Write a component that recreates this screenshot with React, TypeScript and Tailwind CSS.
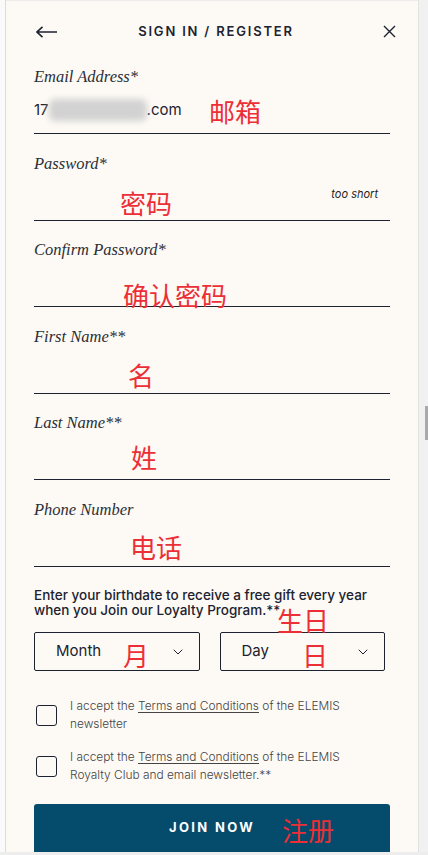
import React from "react";
import { ChevronDown } from "lucide-react";

const sans = "font-['Inter','Liberation_Sans',sans-serif]";
const serif = "font-['Liberation_Serif',serif]";
const cjk = "font-['Noto_Sans_CJK_SC',sans-serif]";

function Field({
  label,
  children,
  hint,
}: {
  label: string;
  children?: React.ReactNode;
  hint?: string;
}) {
  return (
    <div className="relative mb-[19.5px]">
      <div className={`${serif} italic text-[16.5px] leading-5 text-[#2b2f38]`}>{label}</div>
      <div className="h-[47px] border-b border-[#1c2230] flex items-center">{children}</div>
      {hint && (
        <span className={`${sans} absolute right-3 top-[32px] text-[11px] italic text-[#222]`}>{hint}</span>
      )}
    </div>
  );
}

function DateSelect({ label }: { label: string }) {
  return (
    <div className="flex-1 h-[39px] border border-[#1c2230] rounded-[2px] flex items-center justify-between pl-[21px] pr-[13px]">
      <span className={`${sans} text-[15px] text-[#1c2230]`}>{label}</span>
      <ChevronDown className="w-4 h-4 text-[#1c2230]" strokeWidth={1.5} />
    </div>
  );
}

function Consent({ children }: { children: React.ReactNode }) {
  return (
    <div className="flex items-center gap-[13px] pl-[2px]">
      <div className="w-[21px] h-[21px] shrink-0 border border-[#1c2230] rounded-[3px]" />
      <p className={`${sans} font-light text-[11.9px] leading-[18px] text-[#444]`}>{children}</p>
    </div>
  );
}

// red notes placed over the form
const notes = [
  { text: "邮箱", x: 209, y: 98 },
  { text: "密码", x: 120, y: 190 },
  { text: "确认密码", x: 123, y: 282 },
  { text: "名", x: 128, y: 362 },
  { text: "姓", x: 131, y: 444 },
  { text: "电话", x: 130, y: 534 },
  { text: "生日", x: 277, y: 607 },
  { text: "月", x: 123, y: 642 },
  { text: "日", x: 302, y: 642 },
  { text: "注册", x: 282, y: 817 },
];

export default function App() {
  return (
    <div className="relative w-[428px] h-[855px] bg-[#ededed] overflow-hidden">
      <div className="flex h-[852px]">
        <div className="w-[6px] bg-[#fafafa] border-r border-[#dcdcdc]" />
        <div className="w-[412px] bg-[#fdfaf5] border-t border-[#ececec] flex flex-col">
          <header className="h-16 grid grid-cols-[1fr_auto_1fr] items-center pl-[30px] pr-[22px]">
            <svg width="21" height="12" viewBox="0 0 21 12" fill="none" stroke="#1c2230" strokeWidth="1.6">
              <path d="M1 6h20M6.5 0.8L1 6l5.5 5.2" />
            </svg>
            <h1 className={`${sans} font-semibold text-[13px] tracking-[0.14em] text-[#1c2230]`}>
              SIGN IN / REGISTER
            </h1>
            <svg className="justify-self-end" width="13" height="13" viewBox="0 0 13 13" stroke="#1c2230" strokeWidth="1.4">
              <path d="M1 1l11 11M12 1L1 12" />
            </svg>
          </header>

          <form className="px-7 pt-[5px] flex flex-col">
            <Field label="Email Address*">
              <span className={`${sans} text-[15px] text-[#1c2230] flex items-center`}>
                17
                <span className="inline-block w-[98px] h-[22px] bg-[#d2d2d2] rounded-md blur-[3px]" />
                .com
              </span>
            </Field>
            <Field label="Password*" hint="too short" />
            <Field label="Confirm Password*" />
            <Field label="First Name**" />
            <Field label="Last Name**" />
            <Field label="Phone Number" />

            <p className={`${sans} font-medium text-[13.5px] leading-[15px] text-[#1c2230] mt-[2px]`}>
              Enter your birthdate to receive a free gift every year
              <br />
              when you Join our Loyalty Program.**
            </p>
            <div className="flex gap-5 mt-[14px] pr-[5px]">
              <DateSelect label="Month" />
              <DateSelect label="Day" />
            </div>

            <div className="flex flex-col gap-[15px] mt-[26px]">
              <Consent>
                I accept the <span className="underline underline-offset-2">Terms and Conditions</span> of the ELEMIS
                <br />
                newsletter
              </Consent>
              <Consent>
                I accept the <span className="underline underline-offset-2">Terms and Conditions</span> of the ELEMIS
                <br />
                Royalty Club and email newsletter.**
              </Consent>
            </div>

            <button
              type="button"
              className={`${sans} mt-[20px] h-12 rounded-t-[3px] bg-[#044b6c] text-white font-bold text-[13px] tracking-[0.18em]`}
            >
              JOIN NOW
            </button>
          </form>
        </div>
        <div className="w-[10px] bg-[#f1f1f1] border-l border-[#e2e2e2] relative">
          <div className="absolute right-0 top-[406px] w-[3px] h-[34px] bg-[#a9a9a9]" />
        </div>
      </div>

      {notes.map((n) => (
        <span
          key={n.text}
          className={`${cjk} absolute text-[26px] leading-[26px] text-[#ec2f37]`}
          style={{ left: n.x, top: n.y }}
        >
          {n.text}
        </span>
      ))}
    </div>
  );
}
